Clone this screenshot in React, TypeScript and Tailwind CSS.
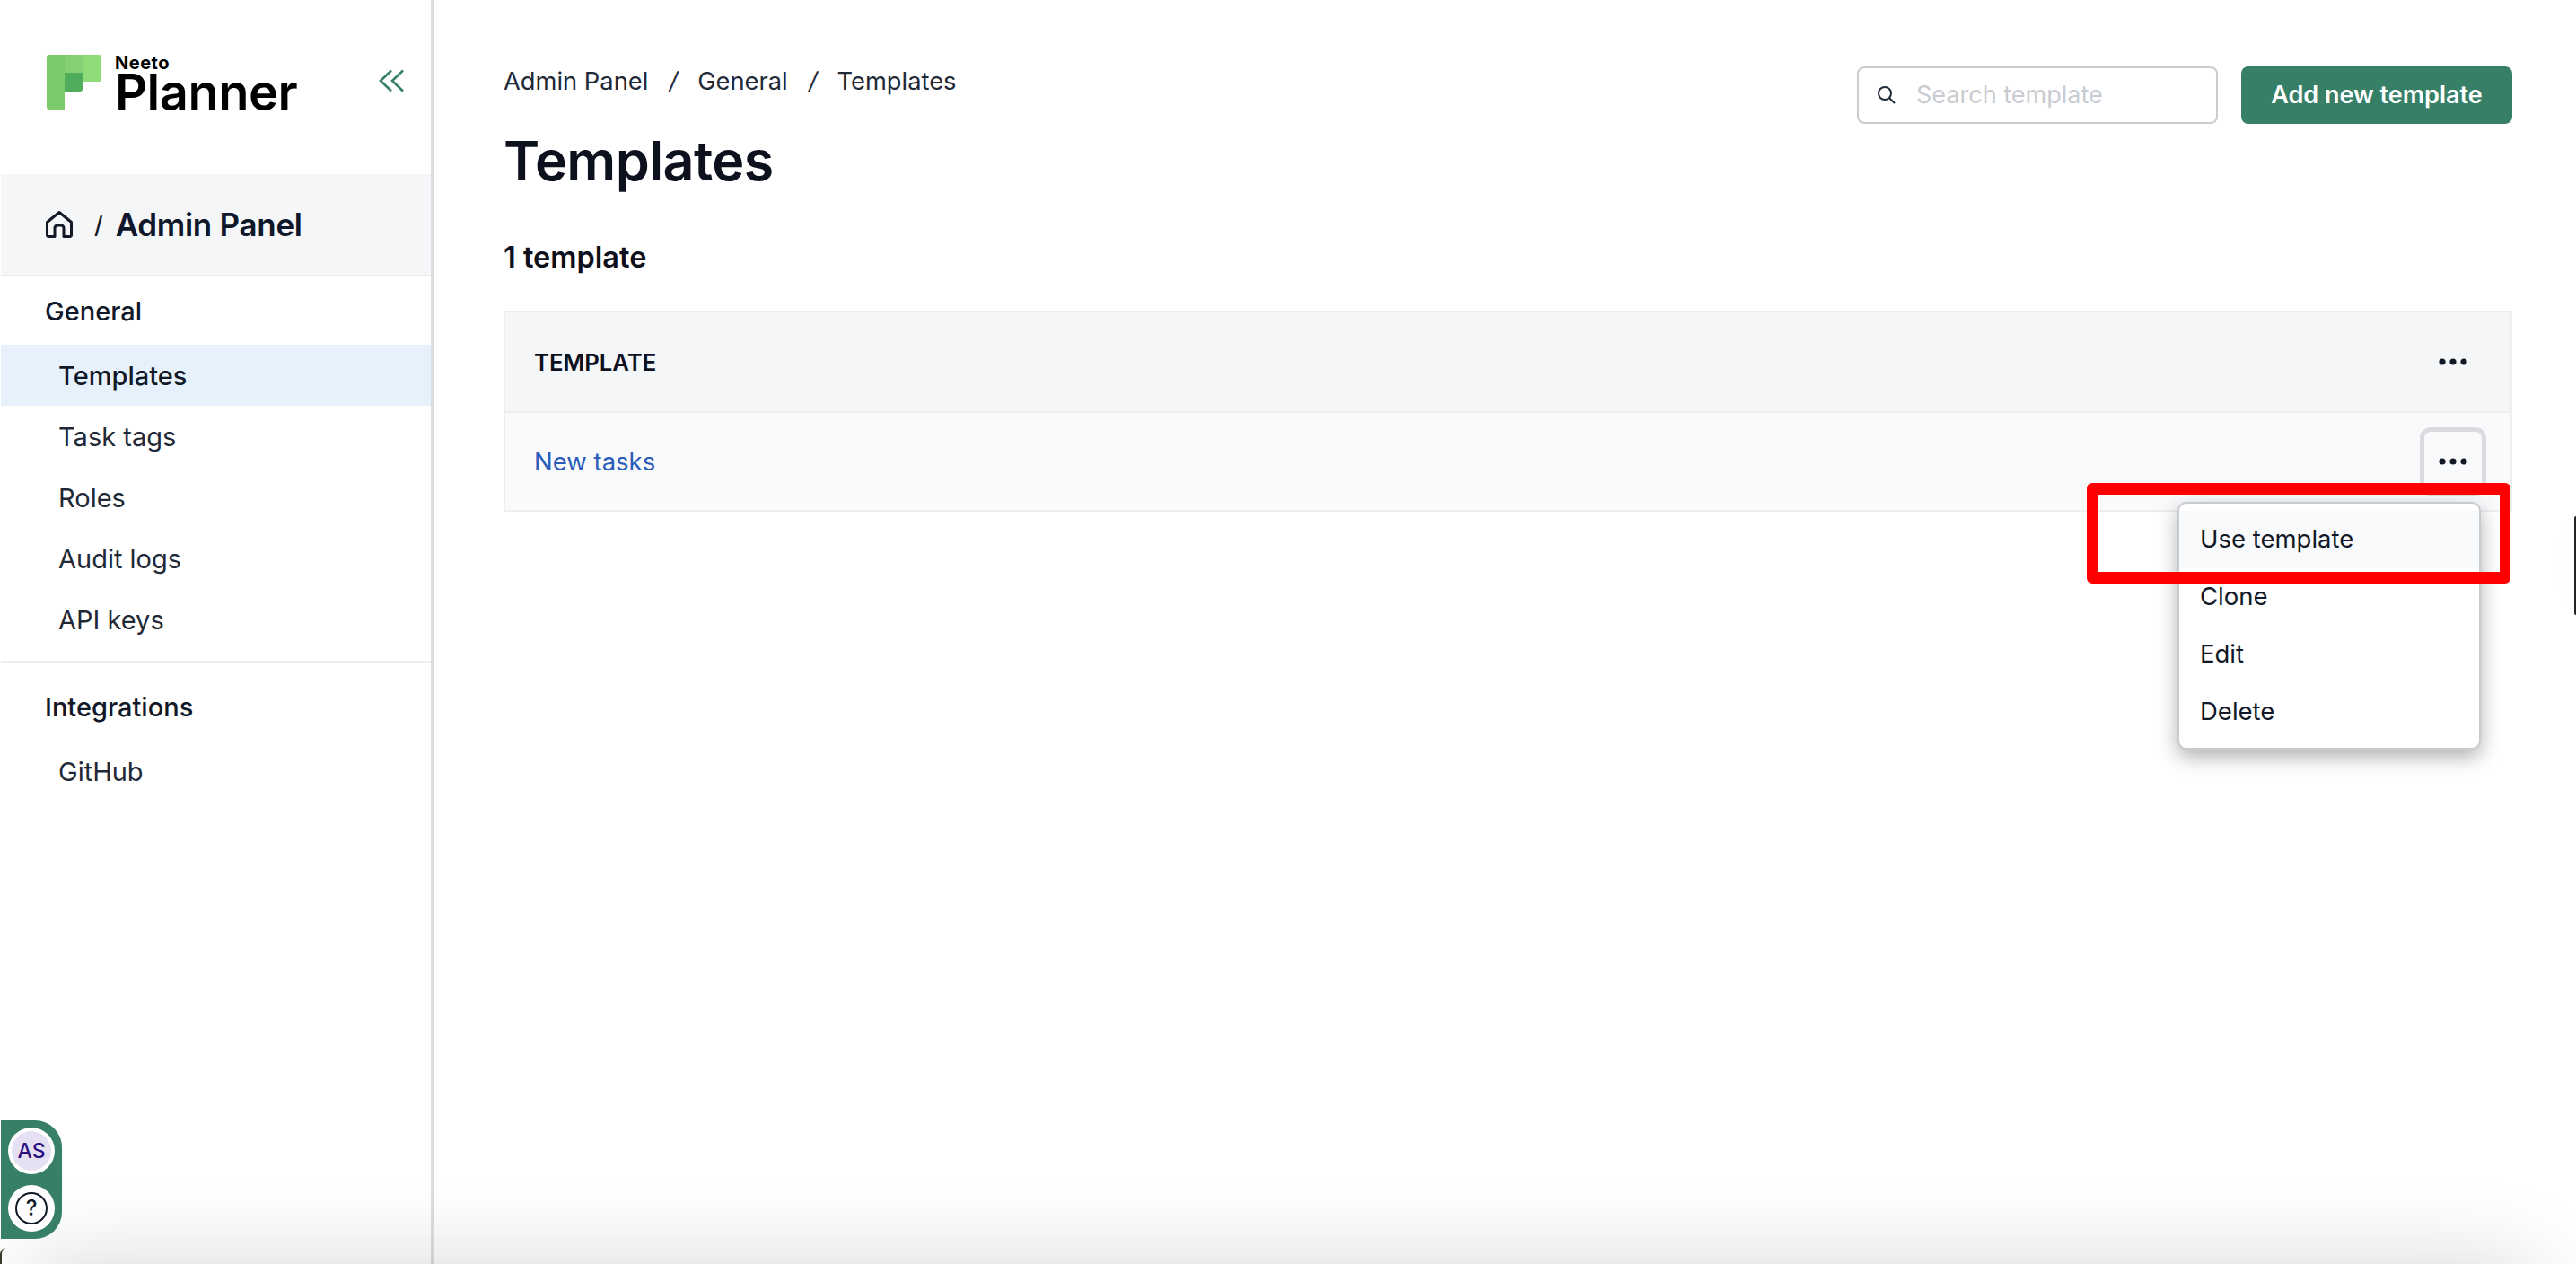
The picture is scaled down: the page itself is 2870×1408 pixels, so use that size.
import React from "react";

const NAV_GENERAL = ["Templates", "Task tags", "Roles", "Audit logs", "API keys"];
const MENU_ITEMS = ["Use template", "Clone", "Edit", "Delete"];

const Logo = () => (
  <svg width="62" height="61" viewBox="0 0 62 61" className="shrink-0">
    <path d="M3 0H20V61H3a3 3 0 0 1-3-3V3a3 3 0 0 1 3-3Z" fill="#7bcb6a" />
    <rect x="20" y="0" width="20" height="20" fill="#84d072" />
    <path d="M20 20H40V38a3 3 0 0 1-3 3H20Z" fill="#4fac5b" />
    <path d="M40 0H58a3 3 0 0 1 3 3V27a3 3 0 0 1-3 3H40Z" fill="#8edb78" />
  </svg>
);

const Dots = () => (
  <svg width="32" height="8" viewBox="0 0 32 8">
    <circle cx="4" cy="4" r="3.6" fill="#111827" />
    <circle cx="16" cy="4" r="3.6" fill="#111827" />
    <circle cx="28" cy="4" r="3.6" fill="#111827" />
  </svg>
);

const App = () => {
  return (
    <div className="relative flex h-[1408px] w-[2870px] overflow-hidden bg-white font-[Inter,sans-serif] text-[#1f2937]">
      {/* Sidebar */}
      <aside className="flex w-[484px] shrink-0 flex-col border-r-[4px] border-[#dcdee1] pl-px">
        <div className="flex h-[194px] items-start justify-between pl-[51px] pr-[30px] pt-[61px]">
          <div className="flex gap-[14px]">
            <Logo />
            <div className="flex flex-col">
              <span className="h-[20px] text-[20px] font-bold leading-[18px] tracking-[0.5px] text-black">Neeto</span>
              <span className="text-[56px] font-semibold leading-[44px] tracking-[-0.5px] text-black">Planner</span>
            </div>
          </div>
          <svg width="28" height="26" viewBox="0 0 28 26" fill="none" stroke="#387f68" strokeWidth="2.6" className="mt-[16px]">
            <path d="M14 1.500 2 13l12 11.500" />
            <path d="M27 1.500 15 13l12 11.500" />
          </svg>
        </div>
        <div className="flex h-[114px] items-center border-b-2 border-[#e9ebed] bg-[#f5f6f8] pl-[49px]">
          <svg width="32" height="32" viewBox="0 0 32 32" fill="none" stroke="#111827" strokeWidth="3" strokeLinejoin="round">
            <path d="M2.500 13.500 16 2.500l13.500 11V28a1.500 1.500 0 0 1-1.500 1.500h-7V20a3 3 0 0 0-3-3h-4a3 3 0 0 0-3 3v9.500H4A1.500 1.500 0 0 1 2.500 28Z" />
          </svg>
          <span className="ml-[23px] text-[26px] font-medium text-[#111827]">/</span>
          <span className="ml-[14px] text-[35px] font-semibold tracking-[-0.3px] text-[#0f172a]">Admin Panel</span>
        </div>
        <div className="flex h-[76px] items-center pl-[49px] pt-[1px] text-[29px] font-medium text-[#111827]">General</div>
        <nav className="flex flex-col">
          {NAV_GENERAL.map((item, i) => (
            <div
              key={item}
              className={
                i === 0
                  ? "flex h-[68px] items-center bg-[#e6f1fc] pl-[64px] pt-[2px] text-[29px] font-medium text-[#111827]"
                  : "flex h-[68px] items-center pl-[64px] pt-[2px] text-[29px] text-[#1f2937]"
              }
            >
              {item}
            </div>
          ))}
        </nav>
        <div className="mt-[12px] h-[2px] bg-[#eceef0]" />
        <div className="mt-[20px] flex h-[58px] items-center pl-[49px] pt-[2px] text-[29px] font-medium text-[#111827]">Integrations</div>
        <div className="flex h-[86px] items-center pl-[64px] pt-[2px] text-[29px] text-[#1f2937]">GitHub</div>
      </aside>

      {/* Main */}
      <main className="flex min-w-0 flex-1 flex-col pl-[77px] pr-[71px]">
        <div className="flex items-start justify-between pt-[74px]">
          <div className="-mt-[1px]">
            <div className="flex items-center text-[27.300px] leading-[36px] text-[#1f2937]">
              <span>Admin Panel</span>
              <span className="ml-[23px] italic">/</span>
              <span className="ml-[22px]">General</span>
              <span className="ml-[23px] italic">/</span>
              <span className="ml-[22px]">Templates</span>
            </div>
          </div>
          <div className="flex gap-[26px]">
            <div className="flex h-[64px] w-[402px] items-center rounded-[8px] border-2 border-[#c8ccd1] bg-white pl-[19px]">
              <svg width="24" height="24" viewBox="0 0 24 24" fill="none" stroke="#1f2937" strokeWidth="2">
                <circle cx="10" cy="10" r="7" />
                <path d="m15 15 6 6" />
              </svg>
              <span className="ml-[21px] text-[27px] text-[#c8ccd1]">Search template</span>
            </div>
            <button className="flex h-[64px] w-[302px] items-center justify-center rounded-[8px] bg-[#387f68] text-[27px] font-semibold text-white">
              Add new template
            </button>
          </div>
        </div>
        <h1 className="mt-[5px] text-[61px] font-semibold leading-[72px] tracking-[-0.6px] text-[#0c111d]">Templates</h1>
        <div className="mt-[52px] text-[32.500px] font-semibold leading-[40px] text-[#0c111d]">1 template</div>
        <div className="mt-[39px] border-x-2 border-t-2 border-[#eceef0]">
          <div className="flex h-[112px] items-center justify-between border-b-2 border-[#eceef0] bg-[#f5f6f8] pl-[32px] pr-[48px]">
            <span className="pt-[2px] text-[25.700px] font-semibold text-[#0c111d]">TEMPLATE</span>
            <Dots />
          </div>
          <div className="flex h-[110px] items-center justify-between border-b-2 border-[#eceef0] bg-[#f9fafb] pl-[32px] pr-[27px]">
            <span className="pt-[2px] text-[27.500px] text-[#2a5bb8]">New tasks</span>
            <div className="flex h-[76px] w-[74px] items-center justify-center rounded-[12px] border-[5px] border-[#d9dbde]">
              <Dots />
            </div>
          </div>
        </div>
      </main>

      {/* Window edge and shadow */}
      <div className="pointer-events-none absolute -bottom-[200px] left-[30px] right-[50px] h-[200px] shadow-[0_0_100px_rgba(0,0,0,0.16)]" />
      <div className="absolute bottom-0 left-0 h-[18px] w-[7px] rounded-tl-[12px] border-l-2 border-t-0 border-[#3a3a2a]" />
      <div className="absolute right-0 top-[575px] h-[110px] w-[2px] rounded-l-[2px] bg-[#222] shadow-[0_0_40px_rgba(0,0,0,0.14)]" />

      {/* Actions dropdown */}
      <div className="absolute left-[2426px] top-[559px] flex h-[276px] w-[338px] flex-col rounded-[10px] border-2 border-[#c8ccd1] bg-white pt-[8px] shadow-[0_8px_22px_rgba(0,0,0,0.32)]">
        {MENU_ITEMS.map((item, i) => (
          <div
            key={item}
            className={
              i === 0
                ? "flex h-[64px] shrink-0 items-center bg-[#f9fafb] pl-[23px] text-[27.500px] text-[#111827]"
                : "flex h-[64px] shrink-0 items-center pl-[23px] text-[27.500px] text-[#111827]"
            }
          >
            {item}
          </div>
        ))}
      </div>

      {/* Red annotation box */}
      <div className="absolute left-[2325px] top-[538px] h-[112px] w-[472px] rounded-[6px] border-x-[12px] border-y-[13px] border-[#ff0000]" />

      {/* Help widget */}
      <div className="absolute left-px top-[1248px] flex h-[132px] w-[68px] flex-col items-center gap-[12px] rounded-r-[30px] bg-[#387f68] pt-[8px]">
        <div className="flex h-[52px] w-[52px] items-center justify-center rounded-full bg-white">
          <div className="flex h-[44px] w-[44px] items-center justify-center rounded-full bg-[#e5e1f2] text-[23px] font-medium text-[#2a0f80]">
            AS
          </div>
        </div>
        <div className="flex h-[52px] w-[52px] items-center justify-center rounded-full bg-white">
          <div className="flex h-[36px] w-[36px] items-center justify-center rounded-full border-[2.500px] border-[#111827] text-[24px] font-medium text-[#111827]">
            ?
          </div>
        </div>
      </div>
    </div>
  );
};

export default App;
